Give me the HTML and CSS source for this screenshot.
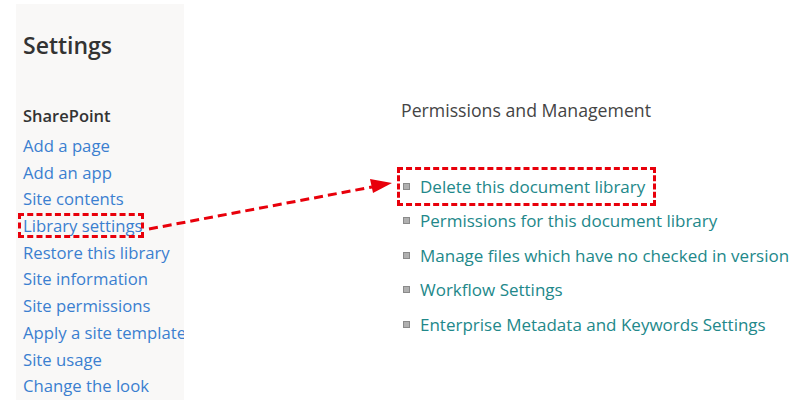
FILE: index.html
```html
<!DOCTYPE html>
<html>
<head>
<meta charset="utf-8">
<link rel="stylesheet" href="styles.css">
</head>
<body>
<div class="page">
  <aside class="sidebar">
    <h1 class="title">Settings</h1>
    <div class="group-title">SharePoint</div>
    <ul class="nav">
      <li><a>Add a page</a></li>
      <li><a>Add an app</a></li>
      <li><a>Site contents</a></li>
      <li><a class="hl-small">Library settings</a></li>
      <li><a>Restore this library</a></li>
      <li><a>Site information</a></li>
      <li><a>Site permissions</a></li>
      <li><a>Apply a site template</a></li>
      <li><a>Site usage</a></li>
      <li><a>Change the look</a></li>
    </ul>
  </aside>
  <main class="main">
    <h2 class="section">Permissions and Management</h2>
    <ul class="links">
      <li><span class="bullet"></span><a class="hl-big">Delete this document library</a></li>
      <li><span class="bullet"></span><a>Permissions for this document library</a></li>
      <li><span class="bullet"></span><a>Manage files which have no checked in version</a></li>
      <li><span class="bullet"></span><a>Workflow Settings</a></li>
      <li><span class="bullet"></span><a>Enterprise Metadata and Keywords Settings</a></li>
    </ul>
  </main>
  <svg class="arrow" width="800" height="400" viewBox="0 0 800 400">
    <line x1="149" y1="229" x2="372" y2="187" stroke="#e8000b" stroke-width="3" stroke-dasharray="9 5"/>
    <polygon points="370,179 392,183 373,193" fill="#e8000b"/>
  </svg>
</div>
</body>
</html>
```
FILE: styles.css
```css
html, body {
  margin: 0;
  padding: 0;
  background: #ffffff;
}
.page {
  position: relative;
  display: flex;
  width: 800px;
  height: 400px;
  overflow: hidden;
  font-family: "Open Sans", "Noto Sans", sans-serif;
}
.sidebar {
  width: 161px;
  flex: none;
  margin-left: 16px;
  margin-top: 4px;
  padding-left: 7px;
  background: #f9f8f7;
  overflow: hidden;
  white-space: nowrap;
}
.title {
  margin: 27px 0 0 0;
  font-size: 23px;
  font-weight: 600;
  line-height: 28px;
  color: #333333;
}
.group-title {
  margin-top: 46px;
  font-size: 16.5px;
  font-weight: 600;
  color: #333333;
  line-height: 22px;
}
.nav {
  list-style: none;
  margin: 6px 0 0 0;
  padding: 0;
}
.nav li {
  height: 26.7px;
  line-height: 26.7px;
  font-size: 16.7px;
}
.nav a {
  color: #3b7fd0;
}
.hl-small {
  outline: 3px dashed #e8000b;
  outline-offset: -2px;
  padding: 0 1px 0 4px;
  margin-left: -4px;
}
.main {
  padding-left: 217px;
  padding-top: 97px;
}
.section {
  margin: 0;
  font-size: 17.7px;
  font-weight: 400;
  color: #444444;
  line-height: 26px;
  white-space: nowrap;
}
.links {
  list-style: none;
  margin: 46px 0 0 0;
  padding: 0;
  white-space: nowrap;
}
.links li {
  display: flex;
  align-items: center;
  height: 34.5px;
  font-size: 17px;
  color: #22888a;
}
.bullet {
  width: 5px;
  height: 5px;
  background: #b0b0b0;
  border: 1px solid #8a8a8a;
  margin: 0 10px 0 2px;
  flex: none;
}
.hl-big {
  position: relative;
}
.hl-big::after {
  content: "";
  position: absolute;
  left: -23px;
  right: -11px;
  top: -8px;
  bottom: -8px;
  border: 3px dashed #e8000b;
}
.arrow {
  position: absolute;
  left: 0;
  top: 0;
  pointer-events: none;
}
```
